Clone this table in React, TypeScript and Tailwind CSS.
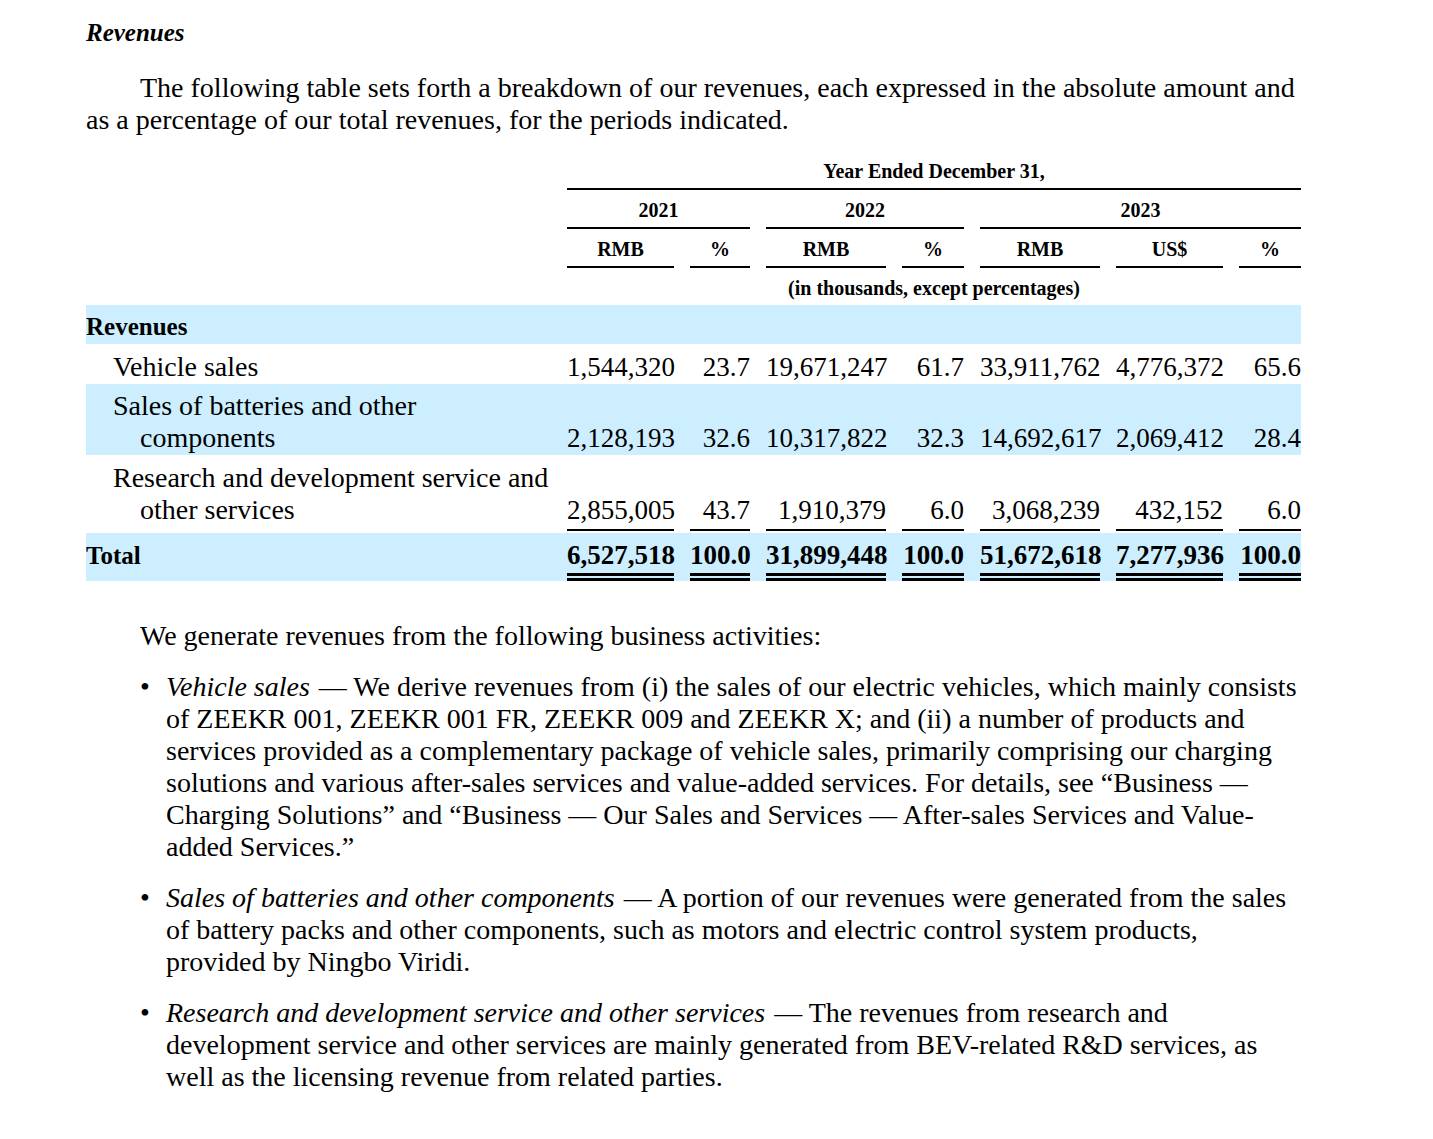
const grid = 'grid grid-cols-[465px_107px_60px_120px_62px_120px_107px_62px] gap-x-4';

const rows = [
  { label: ['Vehicle sales'], vals: ['1,544,320', '23.7', '19,671,247', '61.7', '33,911,762', '4,776,372', '65.6'], shaded: false, rule: false, pad: 'pt-[7px] pb-[1px]' },
  { label: ['Sales of batteries and other', 'components'], vals: ['2,128,193', '32.6', '10,317,822', '32.3', '14,692,617', '2,069,412', '28.4'], shaded: true, rule: false, pad: 'pt-[6px] pb-[1px]' },
  { label: ['Research and development service and', 'other services'], vals: ['2,855,005', '43.7', '1,910,379', '6.0', '3,068,239', '432,152', '6.0'], shaded: false, rule: true, pad: 'pt-[7px] pb-[7px]' },
];

const totals = ['6,527,518', '100.0', '31,899,448', '100.0', '51,672,618', '7,277,936', '100.0'];
const units = ['RMB', '%', 'RMB', '%', 'RMB', 'US$', '%'];

const head = 'pt-[8px] pb-[5px] leading-[24px] text-[20px] font-bold text-center';

function RevenueTable() {
  return (
    <div className="mt-[15px] w-[1215px]">
      <div className={grid}>
        <div />
        <div className={`col-span-7 border-b-2 border-black ${head}`}>Year Ended December 31,</div>
      </div>
      <div className={grid}>
        <div />
        <div className={`col-span-2 border-b-2 border-black ${head}`}>2021</div>
        <div className={`col-span-2 border-b-2 border-black ${head}`}>2022</div>
        <div className={`col-span-3 border-b-2 border-black ${head}`}>2023</div>
      </div>
      <div className={grid}>
        <div />
        {units.map((u, i) => (
          <div key={i} className={`border-b-2 border-black ${head}`}>{u}</div>
        ))}
      </div>
      <div className={grid}>
        <div />
        <div className={`col-span-7 ${head}`}>(in thousands, except percentages)</div>
      </div>

      {/* section band */}
      <div className="h-[39px] bg-[#cceeff] pt-[6px] text-[25px] font-bold leading-[32px]">Revenues</div>

      {rows.map((r) => (
        <div key={r.label[0]} className={`${grid} items-end ${r.shaded ? 'bg-[#cceeff]' : ''}`}>
          <div className={`${r.pad} leading-[32px] text-[28px]`}>
            <div className="pl-[27px]">{r.label[0]}</div>
            {r.label[1] && <div className="pl-[54px]">{r.label[1]}</div>}
          </div>
          {r.vals.map((v, i) => (
            <div
              key={i}
              className={`text-right text-[27px] leading-[32px] ${r.rule ? 'mb-[2px] pb-[3px] border-b-2 border-black' : 'pb-[1px]'}`}
            >
              {v}
            </div>
          ))}
        </div>
      ))}

      <div className={`${grid} items-end bg-[#cceeff]`}>
        <div className="pt-[6px] pb-[9px] text-[25px] font-bold leading-[32px]">Total</div>
        {totals.map((v, i) => (
          <div
            key={i}
            className="pt-[6px] pb-[2px] text-right text-[27px] font-bold leading-[32px] border-b-[8px] border-double border-black"
          >
            {v}
          </div>
        ))}
      </div>
    </div>
  );
}

const bullets = [
  {
    term: 'Vehicle sales',
    text: ' — We derive revenues from (i) the sales of our electric vehicles, which mainly consists of ZEEKR 001, ZEEKR 001 FR, ZEEKR 009 and ZEEKR X; and (ii) a number of products and services provided as a complementary package of vehicle sales, primarily comprising our charging solutions and various after-sales services and value-added services. For details, see “Business — Charging Solutions” and “Business — Our Sales and Services — After-sales Services and Value-added Services.”',
  },
  {
    term: 'Sales of batteries and other components',
    text: ' — A portion of our revenues were generated from the sales of battery packs and other components, such as motors and electric control system products, provided by Ningbo Viridi.',
  },
  {
    term: 'Research and development service and other services',
    text: ' — The revenues from research and development service and other services are mainly generated from BEV-related R&D services, as well as the licensing revenue from related parties.',
  },
];

export default function App() {
  return (
    <div className="min-h-[1139px] bg-white font-['Liberation_Serif',serif] text-black">
      <div className="ml-[86px] w-[1216px] pt-[17px]">
        <h3 className="text-[25px] font-bold italic leading-[32px]">Revenues</h3>
        <p className="mt-[23px] indent-[54px] text-[28px] leading-[32px]">
          The following table sets forth a breakdown of our revenues, each expressed in the absolute amount and as a
          percentage of our total revenues, for the periods indicated.
        </p>

        <RevenueTable />

        <p className="mt-[39px] pl-[54px] text-[28px] leading-[32px]">
          We generate revenues from the following business activities:
        </p>

        <ul className="pl-[54px]">
          {bullets.map((b) => (
            <li key={b.term} className="mt-[19px] flex text-[28px] leading-[32px]">
              <span className="w-[26px] shrink-0">•</span>
              <span className="flex-1">
                <i className="pr-[2px]">{b.term}</i>
                {b.text}
              </span>
            </li>
          ))}
        </ul>
      </div>
    </div>
  );
}
